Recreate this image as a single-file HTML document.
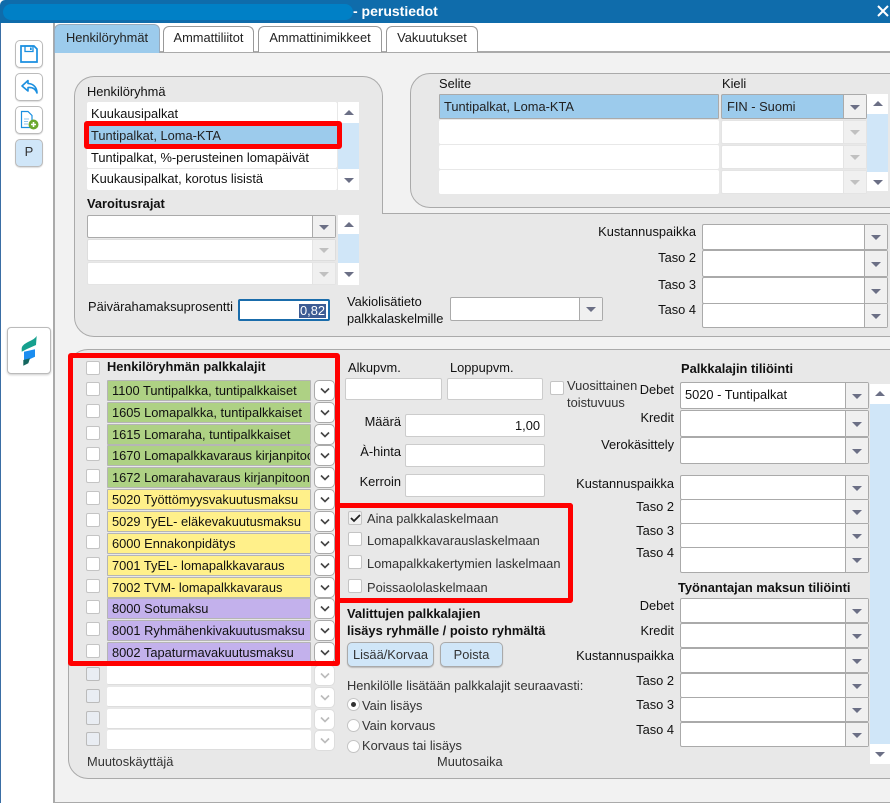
<!DOCTYPE html>
<html lang="fi"><head><meta charset="utf-8"><title>perustiedot</title>
<style>
html,body{margin:0;padding:0;width:890px;height:803px;overflow:hidden;background:#fff}
body{position:relative;font:12.85px "Liberation Sans",Arial,sans-serif;color:#111}
div,svg,span.a{position:absolute;box-sizing:border-box}
.t{white-space:nowrap;line-height:14px;height:14px;margin-top:1px}
.r{text-align:right;width:160px}
.b{font-weight:bold}
.pn{background:#e8e8e8;border:1px solid #aaa}
.f{background:#fff;border:1px solid #aaa;border-radius:2px}
.fd{background:#fff;border-radius:2px}
.s{background:#fff;border:1px solid #aaa;border-radius:2px}
.s i{position:absolute;right:0;top:0;bottom:0;width:22px;background:#f0f0f0;border-left:1px solid #aaa}
.s i:after,.ar:after{content:"";position:absolute;left:50%;top:50%;margin:-2px 0 0 -5px;border:5px solid transparent;border-top:5px solid #6b6f85;border-bottom:0}
.s.d{border-color:#e4e4e4}.s.d i{border-left-color:#e4e4e4}.s.d i:after{border-top-color:#c0c0c0}
.up:after{content:"";position:absolute;left:50%;top:50%;margin:-3px 0 0 -5px;border:5px solid transparent;border-bottom:5px solid #6b6f85;border-top:0}
.ar,.up{background:#fff}
.cb{width:14px;height:14px;background:#fff;border:1px solid #c4c4c4;border-radius:2px}
.cb.d{background:#e9edf3;border-color:#bbb}
.row{left:107px;width:204px;height:21px;overflow:hidden;border:1px solid #b5b5b5;border-radius:1px;padding:0 0 0 4px;line-height:19px;white-space:nowrap}
.g{background:#aed184}.y{background:#fff08a}.p{background:#c3b1ec}
.e{left:107px;width:204px;height:20px;background:#fff;border-radius:2px;border-bottom:1px solid #ddd}
.ch{left:314px;width:21px;height:21px;background:#fff;border:1px solid #aaa;border-radius:5px}
.ch svg{left:5px;top:6px}
.ch.d{border-color:#ddd}
.red{border:5px solid #f00;border-radius:3px}
.btn{background:#d0e6f8;border:1px solid #aaa;border-radius:5px;box-shadow:0 1px 1px #bbb;text-align:center;color:#333}
.side{left:15px;width:28px;height:28px;background:#fff;border:1px solid #bbb;border-radius:5px;box-shadow:0 1px 1px #ddd}
.tab{top:26px;height:26px;background:#fff;border:1px solid #999;border-bottom:0;border-radius:6px 6px 0 0;text-align:center;line-height:22px;color:#222}
.rad{width:13px;height:13px;border-radius:50%;background:#fff;border:1px solid #c4c4c4}
</style></head><body>

<!-- window frame -->
<div style="left:0;top:0;width:890px;height:803px;background:#fff"></div>
<div style="left:0;top:0;width:890px;height:23px;background:#0f6cab;border-radius:5px 0 0 0"></div>
<div style="left:3px;top:4px;width:350px;height:16px;background:#0080c6;border-radius:8px"></div>
<div class="t b" style="left:353px;top:3px;color:#fff;font-size:14px;line-height:15px;height:15px">- perustiedot</div>
<svg style="left:877px;top:5px" width="13" height="13" viewBox="0 0 13 13"><path d="M1 1 L11 11 M11 1 L1 11" stroke="#fff" stroke-width="2" fill="none"/></svg>
<div style="left:0;top:23px;width:1px;height:780px;background:#3a6ea5"></div>

<!-- sidebar -->
<div style="left:53px;top:23px;width:2px;height:780px;background:#aaa"></div>
<div class="side" style="top:40px"></div>
<svg style="left:20px;top:45px" width="18" height="18" viewBox="0 0 18 18"><path d="M1 1H14L17 4V17H1Z" fill="#fff" stroke="#1a8fe0" stroke-width="1.7"/><path d="M5 1H13V6.5H5Z" fill="none" stroke="#1a8fe0" stroke-width="1.3"/><path d="M10 2.5H11.7V5H10Z" fill="#1a8fe0"/></svg>
<div class="side" style="top:73px"></div>
<svg style="left:20px;top:78px" width="19" height="18" viewBox="0 0 19 18"><path d="M8 2.5L2 8L8 13V9.5C12 9.2 15.5 10.5 17 15C17 10 14 5.8 8 5.5Z" fill="#fff" stroke="#1a8fe0" stroke-width="1.6" stroke-linejoin="round"/></svg>
<div class="side" style="top:106px"></div>
<svg style="left:20px;top:110px" width="20" height="21" viewBox="0 0 20 21"><path d="M1.5 1.5H8L12 5.5V17.5H1.5Z" fill="#fff" stroke="#1a8fe0" stroke-width="1.2"/><path d="M4 9H9M4 11.5H8M4 14H8" stroke="#8cc4ee" stroke-width="1"/><circle cx="13.5" cy="14.5" r="5" fill="#6ca82f"/><path d="M11 14.5H16M13.5 12V17" stroke="#fff" stroke-width="1.6"/></svg>
<div class="side" style="top:139px;background:#d0e6f8;text-align:center;line-height:24px;color:#333;font-size:13px">P</div>
<div style="left:7px;top:327px;width:44px;height:47px;background:#fff;border:1px solid #bbb;border-radius:4px;box-shadow:0 1px 2px #ccc"></div>
<svg style="left:20px;top:334px" width="18" height="34" viewBox="0 0 18 34"><path d="M16.7 1.7L16 11L7 15L1.7 17.7V14.3C2 11 6 9 10 7C13 5.5 15.5 4 16.7 1.7Z" fill="#16a08e"/><path d="M4 17.7L15 15.3V22.7L4 27.7Z" fill="#1b8df0"/><path d="M3.3 26L10 24.3L8.3 29.3L3.3 31.7Z" fill="#14665f"/></svg>

<!-- content bg -->
<div style="left:55px;top:52px;width:835px;height:750px;background:#f2f2f2"></div>
<div style="left:55px;top:51px;width:835px;height:2px;background:#aaa"></div>
<div style="left:55px;top:802px;width:835px;height:1px;background:#aaa"></div>

<!-- tabs -->
<div class="tab" style="left:54px;top:24px;width:106px;height:29px;background:#9ccbec;border-color:#9ab;line-height:25px">Henkilöryhmät</div>
<div class="tab" style="left:163px;width:91px">Ammattiliitot</div>
<div class="tab" style="left:258px;width:124px">Ammattinimikkeet</div>
<div class="tab" style="left:386px;width:92px">Vakuutukset</div>

<!-- upper panels -->
<div class="pn" style="left:74px;top:213px;width:830px;height:124px;border-radius:0 0 0 20px"></div>
<div class="pn" style="left:74px;top:76px;width:309px;height:138px;border-radius:20px 20px 0 0;border-bottom:0"></div>
<div style="left:75px;top:205px;width:307px;height:32px;background:#e8e8e8"></div>
<div class="pn" style="left:410px;top:73px;width:500px;height:135px;border-radius:20px 0 0 20px"></div>

<div class="t" style="left:87px;top:84px">Henkilöryhmä</div>
<div class="fd" style="left:87px;top:102px;width:250px;height:22px"></div>
<div class="t" style="left:91px;top:106px">Kuukausipalkat</div>
<div style="left:87px;top:124px;width:250px;height:23px;background:#9ccbec"></div>
<div class="t" style="left:91px;top:128px;color:#222">Tuntipalkat, Loma-KTA</div>
<div class="fd" style="left:87px;top:147px;width:250px;height:21px"></div>
<div class="t" style="left:91px;top:150px">Tuntipalkat, %-perusteinen lomapäivät</div>
<div class="fd" style="left:87px;top:169px;width:250px;height:21px"></div>
<div class="t" style="left:91px;top:171px">Kuukausipalkat, korotus lisistä</div>
<div style="left:338px;top:102px;width:21px;height:88px;background:#d0e6f8"></div>
<div class="up" style="left:338px;top:102px;width:21px;height:21px"></div>
<div class="ar" style="left:338px;top:169px;width:21px;height:21px"></div>
<div class="red" style="left:84px;top:121px;width:258px;height:28px"></div>

<div class="t b" style="left:87px;top:196px">Varoitusrajat</div>
<div class="s" style="left:87px;top:215px;width:249px;height:23px"><i></i></div>
<div class="s d" style="left:87px;top:239px;width:249px;height:22px;border-color:#ddd"><i></i></div>
<div class="s d" style="left:87px;top:262px;width:249px;height:23px"><i></i></div>
<div style="left:338px;top:215px;width:21px;height:70px;background:#d0e6f8"></div>
<div class="up" style="left:338px;top:215px;width:21px;height:19px"></div>
<div class="ar" style="left:338px;top:263px;width:21px;height:22px"></div>

<div class="t" style="left:88px;top:299px">Päivärahamaksuprosentti</div>
<div style="left:238px;top:299px;width:92px;height:22px;background:#fff;border:2px solid #1a6cab;border-radius:2px"></div>
<div class="t" style="left:299px;top:303px;background:#3d5c94;color:#fff;padding:0 1px">0,82</div>

<div class="t" style="left:347px;top:294px">Vakiolisätieto</div>
<div class="t" style="left:347px;top:311px">palkkalaskelmille</div>
<div class="s" style="left:450px;top:297px;width:153px;height:24px"><i></i></div>

<div class="t" style="left:439px;top:76px">Selite</div>
<div class="t" style="left:722px;top:76px">Kieli</div>
<div style="left:439px;top:94px;width:280px;height:25px;background:#9ccbec;border:1px solid #aaa;border-radius:1px"></div>
<div class="t" style="left:444px;top:99px;color:#222">Tuntipalkat, Loma-KTA</div>
<div class="fd" style="left:439px;top:120px;width:280px;height:24px"></div>
<div class="fd" style="left:439px;top:145px;width:280px;height:24px"></div>
<div class="fd" style="left:439px;top:170px;width:280px;height:24px"></div>
<div class="s" style="left:721px;top:94px;width:146px;height:25px;background:#9ccbec"><i></i></div>
<div class="t" style="left:727px;top:99px;color:#222">FIN - Suomi</div>
<div class="s d" style="left:721px;top:120px;width:146px;height:24px"><i></i></div>
<div class="s d" style="left:721px;top:145px;width:146px;height:24px"><i></i></div>
<div class="s d" style="left:721px;top:170px;width:146px;height:24px"><i></i></div>
<div style="left:867px;top:94px;width:21px;height:97px;background:#d0e6f8"></div>
<div class="up" style="left:867px;top:94px;width:21px;height:20px"></div>
<div class="ar" style="left:867px;top:172px;width:21px;height:19px"></div>

<div class="t r" style="left:536px;top:224px">Kustannuspaikka</div>
<div class="t r" style="left:536px;top:250px">Taso 2</div>
<div class="t r" style="left:536px;top:277px">Taso 3</div>
<div class="t r" style="left:536px;top:302px">Taso 4</div>
<div class="s" style="left:702px;top:224px;width:186px;height:26px"><i></i></div>
<div class="s" style="left:702px;top:250px;width:186px;height:27px"><i></i></div>
<div class="s" style="left:702px;top:277px;width:186px;height:27px"><i></i></div>
<div class="s" style="left:702px;top:303px;width:186px;height:25px"><i></i></div>

<!-- lower panel -->
<div class="pn" style="left:68px;top:349px;width:860px;height:430px;border-radius:20px 0 0 20px"></div>

<div class="cb" style="left:86px;top:361px"></div>
<div class="t b" style="left:107px;top:359px">Henkilöryhmän palkkalajit</div>

<div class="cb" style="left:86px;top:382px"></div><div class="row g" style="top:380px">1100 Tuntipalkka, tuntipalkkaiset</div>
<div class="cb" style="left:86px;top:404px"></div><div class="row g" style="top:402px">1605 Lomapalkka, tuntipalkkaiset</div>
<div class="cb" style="left:86px;top:426px"></div><div class="row g" style="top:424px">1615 Lomaraha, tuntipalkkaiset</div>
<div class="cb" style="left:86px;top:447px"></div><div class="row g" style="top:445px">1670 Lomapalkkavaraus kirjanpitoon</div>
<div class="cb" style="left:86px;top:469px"></div><div class="row g" style="top:467px">1672 Lomarahavaraus kirjanpitoon</div>
<div class="cb" style="left:86px;top:491px"></div><div class="row y" style="top:489px">5020 Työttömyysvakuutusmaksu</div>
<div class="cb" style="left:86px;top:513px"></div><div class="row y" style="top:511px">5029 TyEL- eläkevakuutusmaksu</div>
<div class="cb" style="left:86px;top:535px"></div><div class="row y" style="top:533px">6000 Ennakonpidätys</div>
<div class="cb" style="left:86px;top:557px"></div><div class="row y" style="top:555px">7001 TyEL- lomapalkkavaraus</div>
<div class="cb" style="left:86px;top:579px"></div><div class="row y" style="top:577px">7002 TVM- lomapalkkavaraus</div>
<div class="cb" style="left:86px;top:600px"></div><div class="row p" style="top:598px">8000 Sotumaksu</div>
<div class="cb" style="left:86px;top:622px"></div><div class="row p" style="top:620px">8001 Ryhmähenkivakuutusmaksu</div>
<div class="cb" style="left:86px;top:644px"></div><div class="row p" style="top:642px">8002 Tapaturmavakuutusmaksu</div>

<div class="ch" style="top:380px"><svg width="10" height="8" viewBox="0 0 10 8"><path d="M1 1.5L5 5.5L9 1.5" stroke="#444" stroke-width="1.6" fill="none"/></svg></div>
<div class="ch" style="top:402px"><svg width="10" height="8" viewBox="0 0 10 8"><path d="M1 1.5L5 5.5L9 1.5" stroke="#444" stroke-width="1.6" fill="none"/></svg></div>
<div class="ch" style="top:424px"><svg width="10" height="8" viewBox="0 0 10 8"><path d="M1 1.5L5 5.5L9 1.5" stroke="#444" stroke-width="1.6" fill="none"/></svg></div>
<div class="ch" style="top:445px"><svg width="10" height="8" viewBox="0 0 10 8"><path d="M1 1.5L5 5.5L9 1.5" stroke="#444" stroke-width="1.6" fill="none"/></svg></div>
<div class="ch" style="top:467px"><svg width="10" height="8" viewBox="0 0 10 8"><path d="M1 1.5L5 5.5L9 1.5" stroke="#444" stroke-width="1.6" fill="none"/></svg></div>
<div class="ch" style="top:489px"><svg width="10" height="8" viewBox="0 0 10 8"><path d="M1 1.5L5 5.5L9 1.5" stroke="#444" stroke-width="1.6" fill="none"/></svg></div>
<div class="ch" style="top:511px"><svg width="10" height="8" viewBox="0 0 10 8"><path d="M1 1.5L5 5.5L9 1.5" stroke="#444" stroke-width="1.6" fill="none"/></svg></div>
<div class="ch" style="top:533px"><svg width="10" height="8" viewBox="0 0 10 8"><path d="M1 1.5L5 5.5L9 1.5" stroke="#444" stroke-width="1.6" fill="none"/></svg></div>
<div class="ch" style="top:555px"><svg width="10" height="8" viewBox="0 0 10 8"><path d="M1 1.5L5 5.5L9 1.5" stroke="#444" stroke-width="1.6" fill="none"/></svg></div>
<div class="ch" style="top:577px"><svg width="10" height="8" viewBox="0 0 10 8"><path d="M1 1.5L5 5.5L9 1.5" stroke="#444" stroke-width="1.6" fill="none"/></svg></div>
<div class="ch" style="top:598px"><svg width="10" height="8" viewBox="0 0 10 8"><path d="M1 1.5L5 5.5L9 1.5" stroke="#444" stroke-width="1.6" fill="none"/></svg></div>
<div class="ch" style="top:620px"><svg width="10" height="8" viewBox="0 0 10 8"><path d="M1 1.5L5 5.5L9 1.5" stroke="#444" stroke-width="1.6" fill="none"/></svg></div>
<div class="ch" style="top:642px"><svg width="10" height="8" viewBox="0 0 10 8"><path d="M1 1.5L5 5.5L9 1.5" stroke="#444" stroke-width="1.6" fill="none"/></svg></div>

<div class="cb d" style="left:86px;top:667px"></div><div class="e" style="top:665px"></div>
<div class="cb d" style="left:86px;top:689px"></div><div class="e" style="top:687px"></div>
<div class="cb d" style="left:86px;top:711px"></div><div class="e" style="top:709px"></div>
<div class="cb d" style="left:86px;top:732px"></div><div class="e" style="top:730px"></div>
<div class="ch d" style="top:665px"><svg width="10" height="8" viewBox="0 0 10 8"><path d="M1 1.5L5 5.5L9 1.5" stroke="#bbb" stroke-width="1.6" fill="none"/></svg></div>
<div class="ch d" style="top:687px"><svg width="10" height="8" viewBox="0 0 10 8"><path d="M1 1.5L5 5.5L9 1.5" stroke="#bbb" stroke-width="1.6" fill="none"/></svg></div>
<div class="ch d" style="top:709px"><svg width="10" height="8" viewBox="0 0 10 8"><path d="M1 1.5L5 5.5L9 1.5" stroke="#bbb" stroke-width="1.6" fill="none"/></svg></div>
<div class="ch d" style="top:730px"><svg width="10" height="8" viewBox="0 0 10 8"><path d="M1 1.5L5 5.5L9 1.5" stroke="#bbb" stroke-width="1.6" fill="none"/></svg></div>

<div class="t" style="left:87px;top:754px;color:#333">Muutoskäyttäjä</div>
<div class="t" style="left:437px;top:754px;color:#333">Muutosaika</div>

<!-- middle column -->
<div class="t" style="left:348px;top:360px">Alkupvm.</div>
<div class="t" style="left:450px;top:360px">Loppupvm.</div>
<div class="f" style="left:345px;top:378px;width:97px;height:22px;border-color:#ccc"></div>
<div class="f" style="left:447px;top:378px;width:96px;height:22px;border-color:#ccc"></div>
<div class="cb" style="left:550px;top:381px"></div>
<div class="t" style="left:567px;top:378px;color:#333">Vuosittainen</div>
<div class="t" style="left:567px;top:395px;color:#333">toistuvuus</div>
<div class="t r" style="left:241px;top:414px">Määrä</div>
<div class="t r" style="left:241px;top:444px">À-hinta</div>
<div class="t r" style="left:241px;top:474px">Kerroin</div>
<div class="f" style="left:405px;top:414px;width:140px;height:23px;border-color:#ccc"></div>
<div class="t" style="left:515px;top:418px">1,00</div>
<div class="f" style="left:405px;top:444px;width:140px;height:23px;border-color:#ccc"></div>
<div class="f" style="left:405px;top:474px;width:140px;height:23px;border-color:#ccc"></div>

<div class="cb" style="left:348px;top:511px;background:#f2f2f2"></div>
<svg style="left:350px;top:514px" width="11" height="9" viewBox="0 0 11 9"><path d="M1 4L4 7L10 1" stroke="#222" stroke-width="1.8" fill="none"/></svg>
<div class="t" style="left:367px;top:511px;color:#333">Aina palkkalaskelmaan</div>
<div class="cb" style="left:348px;top:532px"></div>
<div class="t" style="left:367px;top:533px;color:#333">Lomapalkkavarauslaskelmaan</div>
<div class="cb" style="left:348px;top:555px"></div>
<div class="t" style="left:367px;top:556px;color:#333">Lomapalkkakertymien laskelmaan</div>
<div class="cb" style="left:348px;top:579px"></div>
<div class="t" style="left:367px;top:580px;color:#333">Poissaololaskelmaan</div>

<div class="t b" style="left:347px;top:606px">Valittujen palkkalajien</div>
<div class="t b" style="left:347px;top:623px">lisäys ryhmälle / poisto ryhmältä</div>
<div class="btn" style="left:347px;top:642px;width:87px;height:25px;line-height:23px">Lisää/Korvaa</div>
<div class="btn" style="left:440px;top:642px;width:63px;height:25px;line-height:23px">Poista</div>
<div class="t" style="left:347px;top:678px;color:#333">Henkilölle lisätään palkkalajit seuraavasti:</div>
<div class="rad" style="left:347px;top:698px"></div>
<div style="left:351px;top:702px;width:5px;height:5px;border-radius:50%;background:#333"></div>
<div class="t" style="left:362px;top:698px;color:#333">Vain lisäys</div>
<div class="rad" style="left:347px;top:719px"></div>
<div class="t" style="left:362px;top:718px;color:#333">Vain korvaus</div>
<div class="rad" style="left:347px;top:740px"></div>
<div class="t" style="left:362px;top:738px;color:#333">Korvaus tai lisäys</div>

<!-- red box 1 & 2 -->
<div class="red" style="left:68px;top:353px;width:272px;height:313px"></div>
<div style="left:335px;top:503px;width:238px;height:100px;border:5px solid #f00;border-left:0;border-radius:0 3px 3px 0"></div>

<!-- right column -->
<div class="t b" style="left:681px;top:361px">Palkkalajin tiliöinti</div>
<div class="t r" style="left:514px;top:382px">Debet</div>
<div class="t r" style="left:514px;top:410px">Kredit</div>
<div class="t r" style="left:514px;top:437px">Verokäsittely</div>
<div class="t r" style="left:514px;top:476px">Kustannuspaikka</div>
<div class="t r" style="left:514px;top:499px">Taso 2</div>
<div class="t r" style="left:514px;top:523px">Taso 3</div>
<div class="t r" style="left:514px;top:545px">Taso 4</div>
<div class="s" style="left:680px;top:382px;width:189px;height:27px"><i></i></div>
<div class="t" style="left:685px;top:387px">5020 - Tuntipalkat</div>
<div class="s" style="left:680px;top:410px;width:189px;height:27px"><i></i></div>
<div class="s" style="left:680px;top:437px;width:189px;height:27px"><i></i></div>
<div class="s" style="left:680px;top:475px;width:189px;height:25px"><i></i></div>
<div class="s" style="left:680px;top:499px;width:189px;height:25px"><i></i></div>
<div class="s" style="left:680px;top:523px;width:189px;height:25px"><i></i></div>
<div class="s" style="left:680px;top:547px;width:189px;height:26px"><i></i></div>

<div class="t b" style="left:678px;top:580px">Työnantajan maksun tiliöinti</div>
<div class="t r" style="left:514px;top:598px">Debet</div>
<div class="t r" style="left:514px;top:623px">Kredit</div>
<div class="t r" style="left:514px;top:648px">Kustannuspaikka</div>
<div class="t r" style="left:514px;top:673px">Taso 2</div>
<div class="t r" style="left:514px;top:697px">Taso 3</div>
<div class="t r" style="left:514px;top:722px">Taso 4</div>
<div class="s" style="left:680px;top:598px;width:189px;height:25px"><i></i></div>
<div class="s" style="left:680px;top:623px;width:189px;height:25px"><i></i></div>
<div class="s" style="left:680px;top:648px;width:189px;height:25px"><i></i></div>
<div class="s" style="left:680px;top:673px;width:189px;height:25px"><i></i></div>
<div class="s" style="left:680px;top:697px;width:189px;height:25px"><i></i></div>
<div class="s" style="left:680px;top:722px;width:189px;height:25px"><i></i></div>

<div style="left:870px;top:384px;width:20px;height:379px;background:#d0e6f8"></div>
<div class="up" style="left:870px;top:384px;width:20px;height:20px"></div>
<div class="ar" style="left:870px;top:744px;width:20px;height:20px"></div>

</body></html>
